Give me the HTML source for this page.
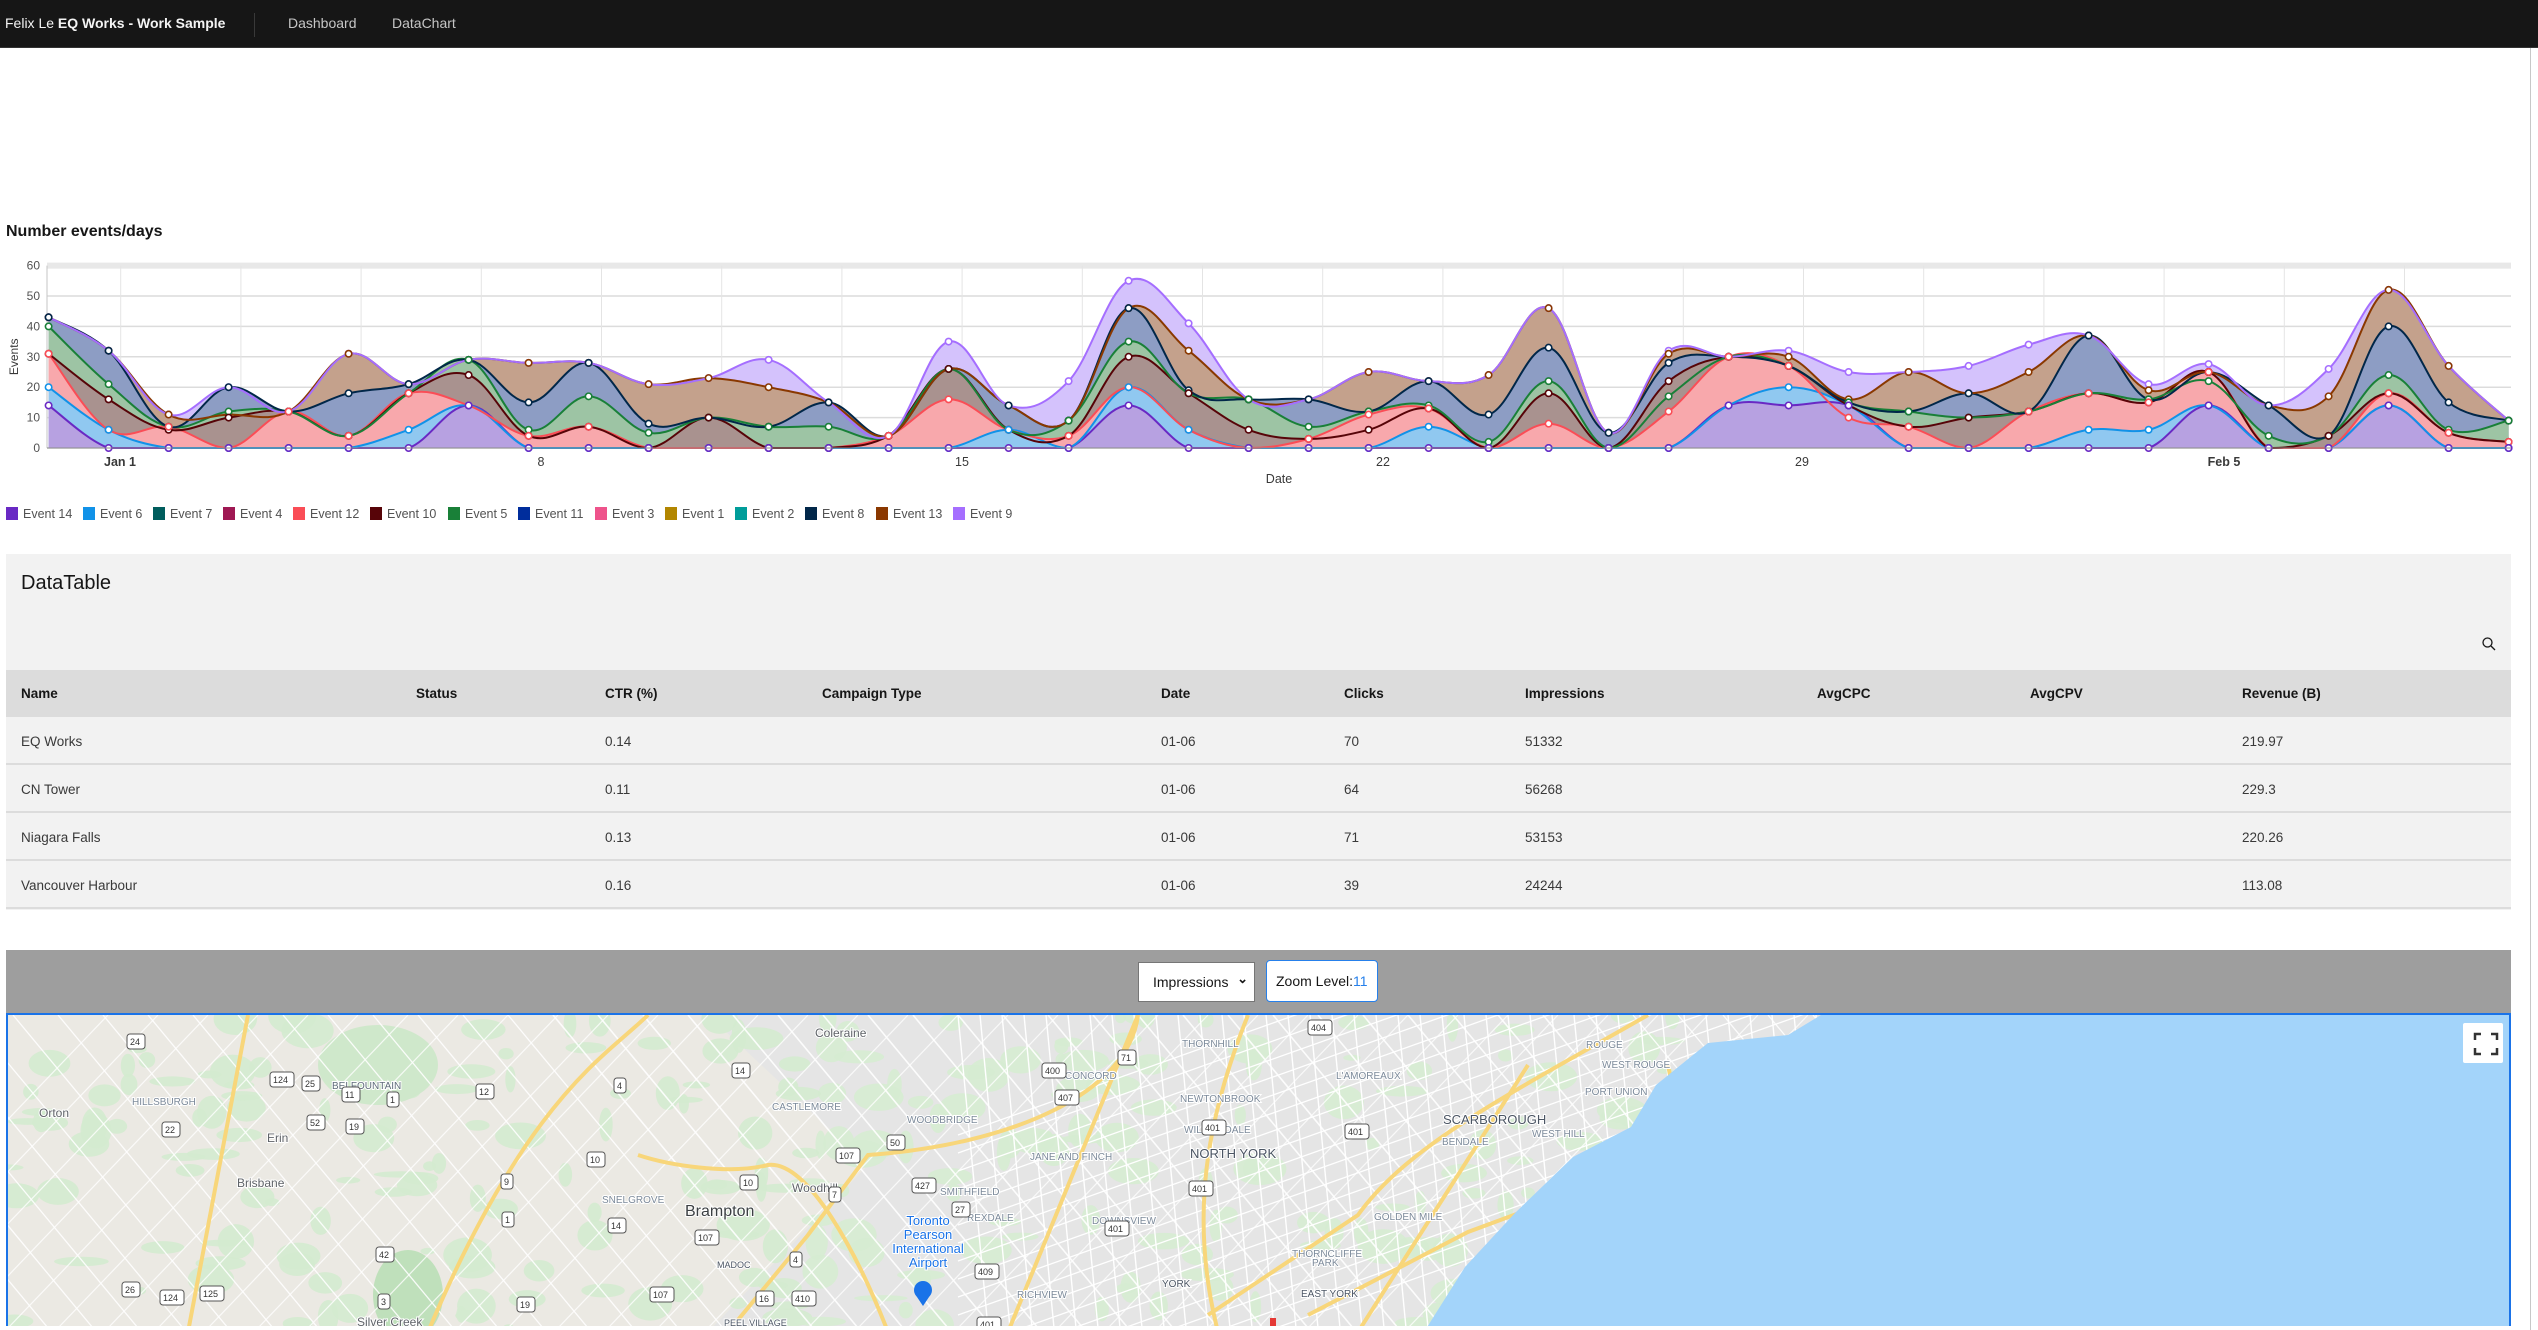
<!DOCTYPE html>
<html><head><meta charset="utf-8"><style>
*{margin:0;padding:0;box-sizing:border-box}
html,body{width:2538px;height:1330px;overflow:hidden}
body{background:#fff;font-family:"Liberation Sans",sans-serif;position:relative;color:#161616}
#wrap{position:absolute;left:0;top:0;width:2538px;height:1330px;overflow:hidden}
.abs{position:absolute}
#nav{left:0;top:0;width:2538px;height:48px;background:#161616;border-bottom:1px solid #333}
#nav span{position:absolute;top:15px;font-size:14px;color:#c6c6c6}
.leg{position:absolute;top:507px;font-size:12.5px;color:#525252;white-space:nowrap}
.leg i{display:inline-block;width:12px;height:13px;vertical-align:-2px;margin-right:5px}
#panel{left:6px;top:554px;width:2505px;height:356px;background:#f2f2f2}
.th,.td{position:absolute;font-size:13.5px}
.th{font-weight:bold;color:#161616}
.td{color:#393939}
.row{position:absolute;left:0;width:2505px;height:48px;border-bottom:2px solid #dcdcdc}
</style></head><body><div id="wrap">
<div id="nav" class="abs">
<span style="left:5px;color:#f4f4f4">Felix Le <b>EQ Works - Work Sample</b></span>
<div class="abs" style="left:254px;top:13px;width:1px;height:24px;background:#393939"></div>
<span style="left:288px">Dashboard</span>
<span style="left:392px">DataChart</span>
</div>
<div class="abs" style="left:2530px;top:48px;width:1px;height:1282px;background:#c8c8c8"></div>
<div class="abs" style="left:6px;top:223px;font-size:16px;font-weight:bold">Number events/days</div>

<svg id="chart" class="abs" style="left:0;top:250px" width="2538" height="250" xmlns="http://www.w3.org/2000/svg"></svg>

<div class="leg" style="left:6px"><i style="background:#6929c4"></i>Event 14</div>
<div class="leg" style="left:83px"><i style="background:#1192e8"></i>Event 6</div>
<div class="leg" style="left:153px"><i style="background:#005d5d"></i>Event 7</div>
<div class="leg" style="left:223px"><i style="background:#9f1853"></i>Event 4</div>
<div class="leg" style="left:293px"><i style="background:#fa4d56"></i>Event 12</div>
<div class="leg" style="left:370px"><i style="background:#570408"></i>Event 10</div>
<div class="leg" style="left:448px"><i style="background:#198038"></i>Event 5</div>
<div class="leg" style="left:518px"><i style="background:#002d9c"></i>Event 11</div>
<div class="leg" style="left:595px"><i style="background:#ee538b"></i>Event 3</div>
<div class="leg" style="left:665px"><i style="background:#b28600"></i>Event 1</div>
<div class="leg" style="left:735px"><i style="background:#009d9a"></i>Event 2</div>
<div class="leg" style="left:805px"><i style="background:#012749"></i>Event 8</div>
<div class="leg" style="left:876px"><i style="background:#8a3800"></i>Event 13</div>
<div class="leg" style="left:953px"><i style="background:#a56eff"></i>Event 9</div>

<div id="panel" class="abs">
<div class="abs" style="left:15px;top:18px;font-size:20px">DataTable</div>
<svg class="abs" style="left:2475px;top:82px" width="16" height="16" viewBox="0 0 16 16"><circle cx="6.5" cy="6.5" r="4.5" fill="none" stroke="#161616" stroke-width="1.3"/><path d="M10 10l4 4" stroke="#161616" stroke-width="1.3"/></svg>
<div class="abs" style="left:0;top:116px;width:2505px;height:47px;background:#dcdcdc"></div>
<div class="th" style="left:15px;top:132px">Name</div>
<div class="th" style="left:410px;top:132px">Status</div>
<div class="th" style="left:599px;top:132px">CTR (%)</div>
<div class="th" style="left:816px;top:132px">Campaign Type</div>
<div class="th" style="left:1155px;top:132px">Date</div>
<div class="th" style="left:1338px;top:132px">Clicks</div>
<div class="th" style="left:1519px;top:132px">Impressions</div>
<div class="th" style="left:1811px;top:132px">AvgCPC</div>
<div class="th" style="left:2024px;top:132px">AvgCPV</div>
<div class="th" style="left:2236px;top:132px">Revenue (B)</div>
<div class="row" style="top:163px"></div><div class="row" style="top:211px"></div><div class="row" style="top:259px"></div><div class="row" style="top:307px"></div>
<div class="td" style="left:15px;top:180px">EQ Works</div><div class="td" style="left:599px;top:180px">0.14</div><div class="td" style="left:1155px;top:180px">01-06</div><div class="td" style="left:1338px;top:180px">70</div><div class="td" style="left:1519px;top:180px">51332</div><div class="td" style="left:2236px;top:180px">219.97</div>
<div class="td" style="left:15px;top:228px">CN Tower</div><div class="td" style="left:599px;top:228px">0.11</div><div class="td" style="left:1155px;top:228px">01-06</div><div class="td" style="left:1338px;top:228px">64</div><div class="td" style="left:1519px;top:228px">56268</div><div class="td" style="left:2236px;top:228px">229.3</div>
<div class="td" style="left:15px;top:276px">Niagara Falls</div><div class="td" style="left:599px;top:276px">0.13</div><div class="td" style="left:1155px;top:276px">01-06</div><div class="td" style="left:1338px;top:276px">71</div><div class="td" style="left:1519px;top:276px">53153</div><div class="td" style="left:2236px;top:276px">220.26</div>
<div class="td" style="left:15px;top:324px">Vancouver Harbour</div><div class="td" style="left:599px;top:324px">0.16</div><div class="td" style="left:1155px;top:324px">01-06</div><div class="td" style="left:1338px;top:324px">39</div><div class="td" style="left:1519px;top:324px">24244</div><div class="td" style="left:2236px;top:324px">113.08</div>
</div>

<div class="abs" style="left:6px;top:950px;width:2505px;height:63px;background:#9e9e9e"></div>
<div class="abs" style="left:1138px;top:962px;width:117px;height:40px;background:#fff;border:1px solid #767676;font-size:14px;padding:11px 0 0 14px">Impressions<span style="position:absolute;right:6px;top:8px;font-size:13px;font-weight:bold">&#8964;</span></div>
<div class="abs" style="left:1266px;top:960px;width:112px;height:42px;background:#fff;border:1px solid #2680eb;border-radius:4px;font-size:14px;padding:12px 0 0 9px">Zoom Level:<span style="color:#2680eb">11</span></div>

<svg id="map" class="abs" style="left:6px;top:1013px;border-top:2px solid #1a73e8;border-left:2px solid #1a73e8;border-right:2px solid #1a73e8" width="2505" height="313" xmlns="http://www.w3.org/2000/svg"></svg>
</div>
<script>
var NS="http://www.w3.org/2000/svg";
function el(p,t,a,txt){var e=document.createElementNS(NS,t);for(var k in a)e.setAttribute(k,a[k]);if(txt!=null)e.textContent=txt;p.appendChild(e);return e;}
var c=document.getElementById('chart');var oy=250;
var X0=48.6,DX=60,Y0=448-oy,SY=3.04;
function px(i){return X0+DX*i} function py(v){return Y0-v*SY}
for(var v=0;v<=60;v+=10){el(c,'line',{x1:47,x2:2511,y1:py(v),y2:py(v),stroke:v==60?'#e8e8e8':'#dcdcdc','stroke-width':v==60?6:1.5});el(c,'text',{x:40,y:py(v)+4,'text-anchor':'end','font-size':12,fill:'#525252','font-family':'Liberation Sans'},v);}
for(var g=0;g<21;g++){var gx=120.7+g*120.2;if(gx<2511)el(c,'line',{x1:gx,x2:gx,y1:py(60),y2:py(0),stroke:'#e4e4e4','stroke-width':1});}
el(c,'line',{x1:47,x2:47,y1:py(60),y2:py(0),stroke:'#c6c6c6'});
var labs=[[120,'Jan 1',1],[541,'8'],[962,'15'],[1383,'22'],[1802,'29'],[2224,'Feb 5',1]];
labs.forEach(function(l){el(c,'text',{x:l[0],y:216,'text-anchor':'middle','font-size':12.5,'font-weight':l[2]?'bold':'normal',fill:'#393939','font-family':'Liberation Sans'},l[1])});
el(c,'text',{x:1279,y:233,'text-anchor':'middle','font-size':12.5,fill:'#393939','font-family':'Liberation Sans'},'Date');
el(c,'text',{x:0,y:0,transform:'translate(18,'+(py(30))+') rotate(-90)','text-anchor':'middle','font-size':12,fill:'#393939','font-family':'Liberation Sans'},'Events');
var L=[
 ['#d4c2fc','#a56eff',[43,32,11,20,12,31,21,29,28,28,21,23,29,15,4,35,14,22,55,41,16,16,25,22,24,46,5,32,30,32,25,25,27,34,37,21,27.6,14,26,52,27,9]],
 ['#c4a18c','#8a3800',[43,32,11,11,12,31,21,29,28,28,21,23,20,15,4,26,14,9,46,32,16,16,25,22,24,46,5,31,30,30,16,25,18,25,37,19,25,14,17,52,27,9]],
 ['#8d9dc4','#012749',[43,32,7,20,12,18,21,29,15,28,8,10,7,15,4,26,14,9,46,19,16,16,12,22,11,33,5,28,30,27,15,12,18,12,37,16,25,14,4,40,15,9]],
 ['#9dc4a4','#198038',[40,21,7,12,12,4,18,29,6,17,5,10,7,7,4,26,6,9,35,18,16,7,12,14,2,22,0,17,30,27,15,12,10,12,18,16,22,4,4,24,6,9]],
 ['#a9928f','#570408',[31,16,6,10,12,4,18,24,4,7,0,10,0,0,4,26,6,4,30,18,6,3,6,13,0,18,0,22,30,27,14,7,10,12,18,15,25,0,4,18,5,2]],
 ['#f8a8ac','#fa4d56',[31,6,7,0,12,4,18,14,4,7,0,0,0,0,4,16,6,4,20,6,0,3,11,13,0,8,0,12,30,27,10,7,0,12,18,15,25,0,0,18,5,2]],
 ['#90c8f0','#1192e8',[20,6,0,0,0,0,6,14,0,0,0,0,0,0,0,0,6,0,20,6,0,0,0,7,0,0,0,0,14,20,14,0,0,0,6,6,14,0,0,14,0,0]],
 ['#b7a1e1','#6929c4',[14,0,0,0,0,0,0,14,0,0,0,0,0,0,0,0,0,0,14,0,0,0,0,0,0,0,0,0,14,14,14,0,0,0,0,0,14,0,0,14,0,0]]
];
function curve(vals){var p=vals.map(function(v,i){return [px(i),py(v)]});var d='M'+p[0][0]+','+p[0][1];
 for(var i=0;i<p.length-1;i++){var p0=p[i-1]||p[i],p1=p[i],p2=p[i+1],p3=p[i+2]||p2;
  var t=0.18;var c1x=p1[0]+(p2[0]-p0[0])*t,c1y=p1[1]+(p2[1]-p0[1])*t,c2x=p2[0]-(p3[0]-p1[0])*t,c2y=p2[1]-(p3[1]-p1[1])*t;
  c1y=Math.min(c1y,Y0);c2y=Math.min(c2y,Y0);
  d+=' C'+c1x.toFixed(1)+','+c1y.toFixed(1)+' '+c2x.toFixed(1)+','+c2y.toFixed(1)+' '+p2[0].toFixed(1)+','+p2[1].toFixed(1);}
 return d;}
L.forEach(function(l){var d=curve(l[2]);el(c,'path',{d:d+' L'+px(41)+','+Y0+' L'+px(0)+','+Y0+' Z',fill:l[0]});});
L.slice().reverse().forEach(function(l){el(c,'path',{d:curve(l[2]),fill:'none',stroke:l[1],'stroke-width':2});});
L.forEach(function(l){l[2].forEach(function(v,i){el(c,'circle',{cx:px(i),cy:py(v),r:3.2,fill:'#fff',stroke:l[1],'stroke-width':1.6});});});
el(c,'line',{x1:47,x2:2511,y1:Y0,y2:Y0,stroke:'#8d8d8d','stroke-width':1});

var m=document.getElementById('map');var W=2505,H=313;
el(m,'rect',{x:0,y:0,width:W,height:H,fill:'#ebe9e3'});
var s=7;function r(){s=(s*9301+49297)%233280;return s/233280;}
el(m,'path',{d:'M700,0 L1900,0 L1700,317 L700,317 L860,150 Z',fill:'#e5e5e5'});
for(var i=0;i<260;i++){var x=r()*1700,y=r()*H,w=10+r()*45,h=6+r()*30;el(m,'ellipse',{cx:x,cy:y,rx:w/2,ry:h/2,fill:x<800?'#d4ebcf':'#d6ecd2',opacity:0.9});}
el(m,'ellipse',{cx:400,cy:280,rx:35,ry:45,fill:'#bfe0bb'});
el(m,'ellipse',{cx:370,cy:50,rx:60,ry:40,fill:'#cfe8cb'});
for(var i=0;i<60;i++){var x=-400+i*45;el(m,'line',{x1:x,y1:0,x2:x+260,y2:H,stroke:'#fff','stroke-width':i>20&&i<45?1.6:1.3,opacity:.9});}
for(var i=0;i<50;i++){var x=-200+i*50;el(m,'line',{x1:x,y1:H,x2:x+300,y2:0,stroke:'#fff','stroke-width':1.2,opacity:.8});}
for(var i=0;i<40;i++){var x=950+i*22;el(m,'line',{x1:x,y1:0,x2:x+30,y2:H,stroke:'#fff','stroke-width':1.4});}
for(var i=0;i<18;i++){var y=i*18;el(m,'line',{x1:950,y1:y+120,x2:1850,y2:y-200,stroke:'#fff','stroke-width':1.3});}
var hw=['M1130,0 C1120,80 1000,130 860,140 L800,220 L720,317','M630,140 C660,150 720,160 760,150 C800,145 850,240 880,317',
'M1240,0 C1200,100 1180,200 1210,317','M1130,0 L1000,317','M1640,0 C1500,80 1400,130 1350,200 L1200,300',
'M640,0 C600,40 520,80 420,317','M240,0 L180,317','M1520,50 L1350,317','M2030,0 L1900,100 L1720,130 L1560,180 L1460,217 L1300,300','M1890,140 L1750,317','M1660,50 L1690,200 L1640,317'];
hw.forEach(function(d){el(m,'path',{d:d,fill:'none',stroke:'#f8d67a','stroke-width':4});});
el(m,'path',{d:'M1813,0 L1780,20 L1700,28 L1685,40 L1648,70 L1623,112 L1565,142 L1507,198 L1457,252 L1416,317 L2505,317 L2505,0 Z',fill:'#a3d4fa'});
var T=[[37,90,'Orton',12,'#5f6368'],[130,78,'HILLSBURGH',10,'#7c8a9a'],[330,62,'BELFOUNTAIN',10,'#5f6c7a'],[265,115,'Erin',12,'#5f6368'],[235,160,'Brisbane',12,'#5f6368'],[813,10,'Coleraine',12,'#5f6368'],[770,83,'CASTLEMORE',10,'#7c8a9a'],[905,96,'WOODBRIDGE',10,'#7c8a9a'],[1063,52,'CONCORD',10,'#7c8a9a'],[1180,20,'THORNHILL',10,'#7c8a9a'],[1178,75,'NEWTONBROOK',10,'#7c8a9a'],[1182,106,'WILLOWDALE',10,'#7c8a9a'],[1188,131,'NORTH YORK',13,'#4b5563'],[1028,133,'JANE AND FINCH',10,'#7c8a9a'],[938,168,'SMITHFIELD',10,'#7c8a9a'],[600,176,'SNELGROVE',10,'#7c8a9a'],[683,189,'Brampton',16,'#3c4043'],[790,165,'Woodhill',12,'#5f6368'],[965,194,'REXDALE',10,'#7c8a9a'],[1090,197,'DOWNSVIEW',10,'#7c8a9a'],[715,241,'MADOC',9,'#4b5563'],[722,299,'PEEL VILLAGE',9,'#4b5563'],[355,299,'Silver Creek',12,'#5f6368'],[1015,271,'RICHVIEW',10,'#7c8a9a'],[1160,260,'YORK',10,'#4b5563'],[1334,52,"L'AMOREAUX",10,'#7c8a9a'],[1584,21,'ROUGE',10,'#7c8a9a'],[1600,41,'WEST ROUGE',10,'#7c8a9a'],[1583,68,'PORT UNION',10,'#7c8a9a'],[1441,97,'SCARBOROUGH',13,'#4b5563'],[1530,110,'WEST HILL',10,'#7c8a9a'],[1440,118,'BENDALE',10,'#7c8a9a'],[1372,193,'GOLDEN MILE',10,'#7c8a9a'],[1290,230,'THORNCLIFFE',10,'#7c8a9a'],[1310,239,'PARK',10,'#7c8a9a'],[1299,270,'EAST YORK',10,'#4b5563']];
T.forEach(function(t){el(m,'text',{x:t[0]-6,y:t[1]+12,'font-size':t[3],fill:t[4],'font-family':'Liberation Sans',stroke:'#fff','stroke-width':2,'paint-order':'stroke'},t[2]);});
[['Toronto',210],['Pearson',224],['International',238],['Airport',252]].forEach(function(a){el(m,'text',{x:920,y:a[1],'text-anchor':'middle','font-size':13,fill:'#1a73e8','font-family':'Liberation Sans',stroke:'#fff','stroke-width':2,'paint-order':'stroke'},a[0]);});
el(m,'circle',{cx:915,cy:275,r:9,fill:'#1a73e8'});el(m,'path',{d:'M907,279 L915,291 L923,279 Z',fill:'#1a73e8'});
var S=[[125,22,'24'],[268,60,'124'],[300,64,'25'],[340,75,'11'],[385,80,'1'],[474,72,'12'],[612,66,'4'],[730,51,'14'],[160,110,'22'],[305,103,'52'],[344,107,'19'],[585,140,'10'],[499,162,'9'],[738,163,'10'],[827,175,'7'],[500,200,'1'],[606,206,'14'],[693,218,'107'],[788,240,'4'],[374,235,'42'],[120,270,'26'],[158,278,'124'],[198,274,'125'],[376,282,'3'],[515,285,'19'],[648,275,'107'],[754,279,'16'],[790,279,'410'],[834,136,'107'],[885,123,'50'],[910,166,'427'],[950,190,'27'],[973,252,'409'],[1040,51,'400'],[1053,78,'407'],[1116,38,'71'],[1187,169,'401'],[1103,209,'401'],[1200,108,'401'],[1343,112,'401'],[1306,8,'404'],[975,305,'401']];
S.forEach(function(a){el(m,'rect',{x:a[0]-6,y:a[1]-3,width:a[2].length*6+6,height:15,rx:3,fill:'#fff',stroke:'#555','stroke-width':1});el(m,'text',{x:a[0]-3,y:a[1]+8,'font-size':9,fill:'#333','font-family':'Liberation Sans'},a[2]);});
el(m,'rect',{x:1262,y:303,width:6,height:10,fill:'#e53935'});
el(m,'rect',{x:2455,y:8,width:40,height:40,rx:2,fill:'#fff'});
el(m,'path',{d:'M2467,25 v-6 h6 M2483,19 h6 v6 M2489,33 v6 h-6 M2473,39 h-6 v-6',fill:'none',stroke:'#333','stroke-width':2.5});
</script>
</body></html>
